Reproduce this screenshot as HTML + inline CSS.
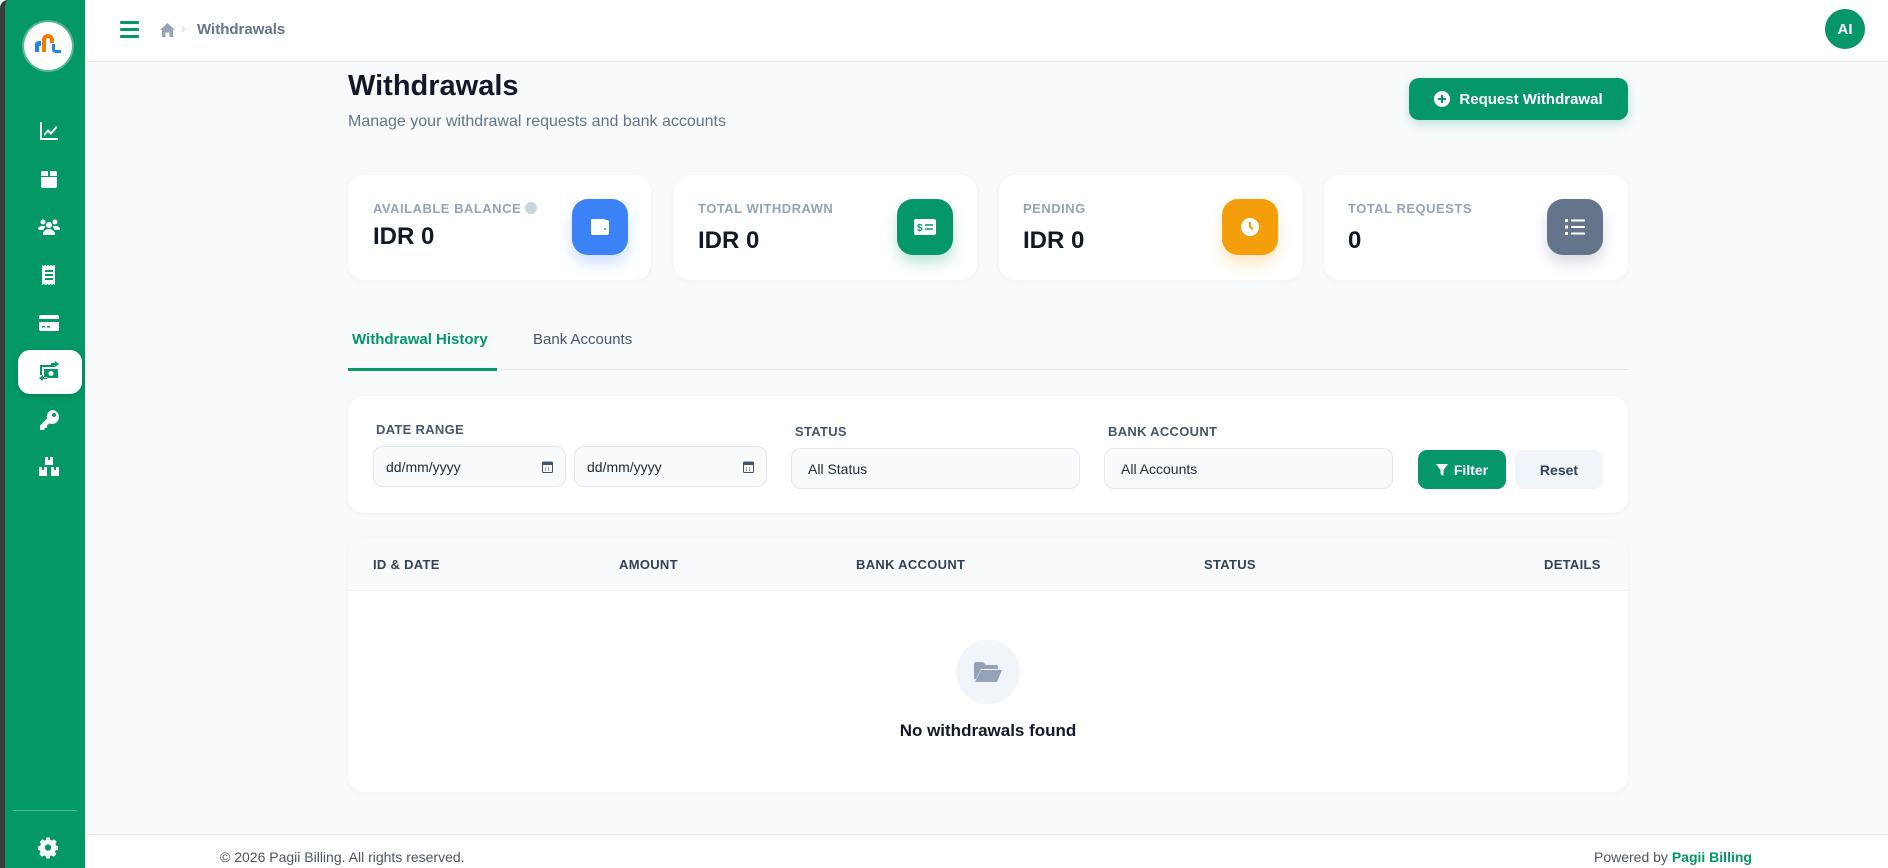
<!DOCTYPE html>
<html><head><meta charset="utf-8">
<style>
*{box-sizing:border-box;margin:0;padding:0}
body{width:1888px;height:868px;overflow:hidden;font-family:"Liberation Sans",sans-serif;background:#f8fafc;position:relative;color:#111827}
.sb{position:absolute;left:0;top:0;width:85px;height:868px;background:#039865;border-left:5px solid #3a3a3a;border-radius:8px 0 0 0}
.logo{position:absolute;left:19px;top:22px;width:48px;height:48px;border-radius:50%;background:#fff;box-shadow:0 0 0 2px rgba(255,255,255,.3)}
.ic{position:absolute;left:32px;width:24px;height:24px;fill:#fff}
.act{position:absolute;left:13px;top:350px;width:64px;height:44px;background:#fff;border-radius:12px;box-shadow:0 2px 6px rgba(0,0,0,.15)}
.hdr{position:absolute;left:85px;top:0;right:0;height:62px;background:#fff;border-bottom:1px solid #e5e7eb}
.abs{position:absolute}
.card{position:absolute;background:#fff;border-radius:16px;box-shadow:0 1px 6px rgba(0,0,0,.04)}
.lbl{position:absolute;font-size:13px;font-weight:bold;color:#94a3b8;letter-spacing:.5px}
.val{position:absolute;font-size:24px;font-weight:bold;color:#111827}
.ib{position:absolute;width:56px;height:56px;border-radius:16px;display:flex;align-items:center;justify-content:center}
.fl{position:absolute;font-size:13px;font-weight:bold;color:#475569;letter-spacing:.3px}
.inp{position:absolute;top:448px;height:41px;border:1px solid #e2e8f0;border-radius:10px;background:#f8fafc;font-size:14px;color:#1f2937;padding:12px 16px}
.th{position:absolute;top:557px;font-size:13px;font-weight:bold;color:#334155;letter-spacing:.3px}
</style></head><body>
<div class="sb">
 <div class="logo"><svg width="48" height="48" viewBox="0 0 48 48"><path d="M11 30v-7c0-3 2-4 4-4h2v5h-2v6z" fill="#1e88e5"/><path d="M18 30v-12c0-4 3-6 6-6s6 2 6 6v3h-4v-3c0-1-1-2-2-2s-2 1-2 2v12z" fill="#f57c00"/><path d="M28 22h3v5c0 1 1 1 2 1h4v3h-5c-3 0-4-2-4-4z" fill="#1e88e5"/></svg></div>
 <svg class="ic" style="top:119px" viewBox="0 0 24 24"><path d="M3 3h2v16h16v2H3z M7 15l4-5 3 3 5-6 1.5 1.3-6.5 7.7-3-3-3.5 4z"/></svg>
 <svg class="ic" style="top:167px" viewBox="0 0 24 24"><path d="M4 10h16v9a2 2 0 0 1-2 2H6a2 2 0 0 1-2-2zM5 4h6v5H4V6a2 2 0 0 1 1-2zm8 0h6a2 2 0 0 1 1 2v3h-7z"/></svg>
 <svg class="ic" style="top:215px" viewBox="0 0 24 24"><circle cx="6" cy="7" r="2.5"/><circle cx="18" cy="7" r="2.5"/><circle cx="12" cy="10" r="3"/><path d="M1 14c0-2 2-3 5-3 1 0 2 .3 2.5.6C7 13 6.5 14 6.5 15H1zM23 14c0-2-2-3-5-3-1 0-2 .3-2.5.6 1.5 1.4 2 2.4 2 3.4H23zM6 19c0-3 3-5 6-5s6 2 6 5v1H6z"/></svg>
 <svg class="ic" style="top:263px" viewBox="0 0 24 24"><path d="M5 2l1.5 1L8 2l1.5 1L11 2l1.5 1L14 2l1.5 1L17 2l1 1v19l-1.5-1-1.5 1-1.5-1-1.5 1-1.5-1-1.5 1-1.5-1L8 22l-1.5-1L5 22zM8 7v2h8V7zm0 4v2h8v-2zm0 4v2h8v-2z" fill-rule="evenodd"/></svg>
 <svg class="ic" style="top:311px" viewBox="0 0 24 24"><path d="M2 6a2 2 0 0 1 2-2h16a2 2 0 0 1 2 2v2H2zm0 5h20v7a2 2 0 0 1-2 2H4a2 2 0 0 1-2-2zm3 4v1.5h3V15zm5 0v1.5h3V15z" fill-rule="evenodd"/></svg>
 <div class="act"></div>
 <svg class="ic" style="top:359px;fill:#039865" viewBox="0 0 24 24"><path d="M3 6h14l1 1v1h-2V8H5v8H3zM7 10h14v9H7zm7 2a2.5 2.5 0 1 0 0 5 2.5 2.5 0 0 0 0-5zM18 2l4 3-4 3V6h-4V4h4zM6 22l-4-3 4-3v2h4v2H6z" fill-rule="evenodd"/></svg>
 <svg class="ic" style="top:408px" viewBox="0 0 24 24"><path d="M15 2a7 7 0 1 1-2.8 13.4L10 17.6V20H7.5v2H3v-4.5l7-7A7 7 0 0 1 15 2zm2 3a2 2 0 1 0 0 4 2 2 0 0 0 0-4z" fill-rule="evenodd"/></svg>
 <svg class="ic" style="top:455px" viewBox="0 0 24 24"><path d="M8 2h3v3h2V2h3v8H8zM2 12h3v3h2v-3h3v9H2zm12 0h3v3h2v-3h3v9h-8z"/></svg>
 <div class="abs" style="left:8px;top:810px;width:64px;height:1px;background:rgba(255,255,255,.3)"></div>
 <svg class="ic" style="top:837px;width:22px;height:22px" viewBox="0 0 24 24"><path d="M10 2h4l.6 2.6 1.8.8 2.3-1.4 2.8 2.8-1.4 2.3.8 1.8L23 11.5v4l-2.6.6-.8 1.8 1.4 2.3-2.8 2.8-2.3-1.4-1.8.8L14 25h-4l-.6-2.6-1.8-.8-2.3 1.4-2.8-2.8 1.4-2.3-.8-1.8L1 15.5v-4l2.6-.6.8-1.8L3 6.8 5.8 4l2.3 1.4 1.8-.8zM12 9.5a3.5 3.5 0 1 0 0 7 3.5 3.5 0 0 0 0-7z" fill-rule="evenodd" transform="translate(0,-1.5)"/></svg>
</div>
<div class="hdr"></div>
<svg class="abs" style="left:120px;top:20px" width="19" height="18" viewBox="0 0 19 18"><rect y="1" width="19" height="3" rx="1" fill="#059669"/><rect y="8" width="19" height="3" rx="1" fill="#059669"/><rect y="15" width="19" height="3" rx="1" fill="#059669"/></svg>
<svg class="abs" style="left:160px;top:23px" width="15" height="14" viewBox="0 0 15 14"><path d="M7.5 0L15 7h-2v7H9.5V9.5h-4V14H2V7H0z" fill="#94a3b8"/></svg>
<div class="abs" style="left:181px;top:20px;font-size:14px;color:#cbd5e1">›</div>
<div class="abs" style="left:197px;top:21px;font-size:15px;font-weight:bold;color:#64748b">Withdrawals</div>
<div class="abs" style="left:1825px;top:9px;width:40px;height:40px;border-radius:50%;background:#059669;color:#fff;font-weight:bold;font-size:15px;display:flex;align-items:center;justify-content:center">AI</div>

<div class="abs" style="left:348px;top:70px;font-size:29px;font-weight:bold;color:#111827">Withdrawals</div>
<div class="abs" style="left:348px;top:113px;font-size:16px;color:#64748b">Manage your withdrawal requests and bank accounts</div>
<div class="abs" style="left:1409px;top:78px;width:219px;height:42px;border-radius:10px;background:#059669;box-shadow:0 4px 10px rgba(5,150,105,.25);color:#fff;font-weight:bold;font-size:15px;display:flex;align-items:center;justify-content:center;gap:9px"><svg width="16" height="16" viewBox="0 0 16 16"><circle cx="8" cy="8" r="8" fill="#fff"/><path d="M8 4v8M4 8h8" stroke="#059669" stroke-width="2"/></svg>Request Withdrawal</div>

<div class="card" style="left:348px;top:175px;width:303px;height:105px"></div>
<div class="card" style="left:674px;top:175px;width:303px;height:105px"></div>
<div class="card" style="left:999px;top:175px;width:303px;height:105px"></div>
<div class="card" style="left:1324px;top:175px;width:304px;height:105px"></div>
<div class="lbl" style="left:373px;top:201px">AVAILABLE BALANCE <span style="display:inline-block;width:12px;height:12px;border-radius:50%;background:#cbd5e1;vertical-align:-1px"></span></div>
<div class="lbl" style="left:698px;top:201px">TOTAL WITHDRAWN</div>
<div class="lbl" style="left:1023px;top:201px">PENDING</div>
<div class="lbl" style="left:1348px;top:201px">TOTAL REQUESTS</div>
<div class="val" style="left:373px;top:223px">IDR 0</div>
<div class="val" style="left:698px;top:227px">IDR 0</div>
<div class="val" style="left:1023px;top:227px">IDR 0</div>
<div class="val" style="left:1348px;top:227px">0</div>
<div class="ib" style="left:572px;top:199px;background:#3b82f6;box-shadow:0 8px 14px rgba(59,130,246,.25)"><svg width="20" height="18" viewBox="0 0 20 18"><rect x="1" y="2" width="18" height="15" rx="2" fill="#fff"/><rect x="1" y="1" width="14" height="3" rx="1" fill="#fff"/><circle cx="15" cy="11" r="1" fill="#3b82f6"/></svg></div>
<div class="ib" style="left:897px;top:199px;background:#059669;box-shadow:0 8px 14px rgba(5,150,105,.25)"><svg width="22" height="16" viewBox="0 0 22 16"><rect width="22" height="16" rx="2" fill="#fff"/><text x="3" y="12" font-size="10" font-weight="bold" fill="#059669" font-family="Liberation Sans">$</text><path d="M11 6h8M11 10h8" stroke="#059669" stroke-width="1.6"/></svg></div>
<div class="ib" style="left:1222px;top:199px;background:#f59e0b;box-shadow:0 8px 14px rgba(245,158,11,.25)"><svg width="20" height="20" viewBox="0 0 20 20"><circle cx="10" cy="10" r="9" fill="#fff"/><path d="M10 5v5l3 2" stroke="#f59e0b" stroke-width="2" fill="none"/></svg></div>
<div class="ib" style="left:1547px;top:199px;background:#64748b;box-shadow:0 8px 14px rgba(100,116,139,.25)"><svg width="20" height="18" viewBox="0 0 20 18"><g fill="#fff"><rect x="0" y="1" width="3" height="3"/><rect x="0" y="7.5" width="3" height="3"/><rect x="0" y="14" width="3" height="3"/><rect x="6" y="1.5" width="14" height="2"/><rect x="6" y="8" width="14" height="2"/><rect x="6" y="14.5" width="14" height="2"/></g></svg></div>

<div class="abs" style="left:352px;top:331px;font-size:15px;font-weight:bold;color:#059669">Withdrawal History</div>
<div class="abs" style="left:533px;top:331px;font-size:15px;color:#475569">Bank Accounts</div>
<div class="abs" style="left:348px;top:369px;width:1280px;height:1px;background:#e2e8f0"></div>
<div class="abs" style="left:348px;top:368px;width:149px;height:3px;background:#059669"></div>

<div class="card" style="left:348px;top:396px;width:1280px;height:117px"></div>
<div class="fl" style="left:376px;top:422px">DATE RANGE</div>
<div class="fl" style="left:795px;top:424px">STATUS</div>
<div class="fl" style="left:1108px;top:424px">BANK ACCOUNT</div>
<div class="inp" style="left:373px;top:446px;width:193px;padding-left:12px">dd/mm/yyyy</div>
<div class="inp" style="left:574px;top:446px;width:193px;padding-left:12px">dd/mm/yyyy</div>
<svg class="abs" style="left:542px;top:461px" width="11" height="12" viewBox="0 0 11 12"><rect x=".5" y="1" width="10" height="10.5" rx="1" fill="none" stroke="#475569"/><rect x=".5" y="1" width="10" height="3" fill="#475569"/><path d="M3 7h1M6 7h1M3 9h1M6 9h1" stroke="#475569"/></svg>
<svg class="abs" style="left:743px;top:461px" width="11" height="12" viewBox="0 0 11 12"><rect x=".5" y="1" width="10" height="10.5" rx="1" fill="none" stroke="#475569"/><rect x=".5" y="1" width="10" height="3" fill="#475569"/><path d="M3 7h1M6 7h1M3 9h1M6 9h1" stroke="#475569"/></svg>
<div class="inp" style="left:791px;width:289px">All Status</div>
<div class="inp" style="left:1104px;width:289px">All Accounts</div>
<div class="abs" style="left:1418px;top:450px;width:88px;height:39px;border-radius:9px;background:#059669;color:#fff;font-size:14px;font-weight:bold;display:flex;align-items:center;justify-content:center;gap:6px"><svg width="12" height="12" viewBox="0 0 12 12"><path d="M0 0h12L7.5 6v6L4.5 10V6z" fill="#fff"/></svg>Filter</div>
<div class="abs" style="left:1515px;top:450px;width:88px;height:39px;border-radius:9px;background:#f1f5f9;color:#334155;font-size:14px;font-weight:bold;display:flex;align-items:center;justify-content:center">Reset</div>

<div class="card" style="left:348px;top:538px;width:1280px;height:254px;overflow:hidden"><div style="height:53px;background:#f8fafc;border-bottom:1px solid #eef2f7"></div></div>
<div class="th" style="left:373px">ID &amp; DATE</div>
<div class="th" style="left:619px">AMOUNT</div>
<div class="th" style="left:856px">BANK ACCOUNT</div>
<div class="th" style="left:1204px">STATUS</div>
<div class="th" style="left:1544px">DETAILS</div>
<div class="abs" style="left:956px;top:640px;width:64px;height:64px;border-radius:50%;background:#f1f5f9;display:flex;align-items:center;justify-content:center"><svg width="28" height="22" viewBox="0 0 28 22"><path d="M0 3a2 2 0 0 1 2-2h7l3 3h10a2 2 0 0 1 2 2v2H7l-5 10H0z" fill="#94a3b8"/><path d="M7 9h21l-5 12H1z" fill="#94a3b8"/></svg></div>
<div class="abs" style="left:848px;top:721px;width:280px;text-align:center;font-size:17px;font-weight:bold;color:#111827">No withdrawals found</div>

<div class="abs" style="left:85px;top:834px;right:0;height:34px;background:#fff;border-top:1px solid #e5e7eb"></div>
<div class="abs" style="left:220px;top:849px;font-size:14px;color:#4b5563">© 2026 Pagii Billing. All rights reserved.</div>
<div class="abs" style="left:1594px;top:849px;font-size:14px;color:#4b5563">Powered by <b style="color:#059669">Pagii Billing</b></div>
</body></html>
